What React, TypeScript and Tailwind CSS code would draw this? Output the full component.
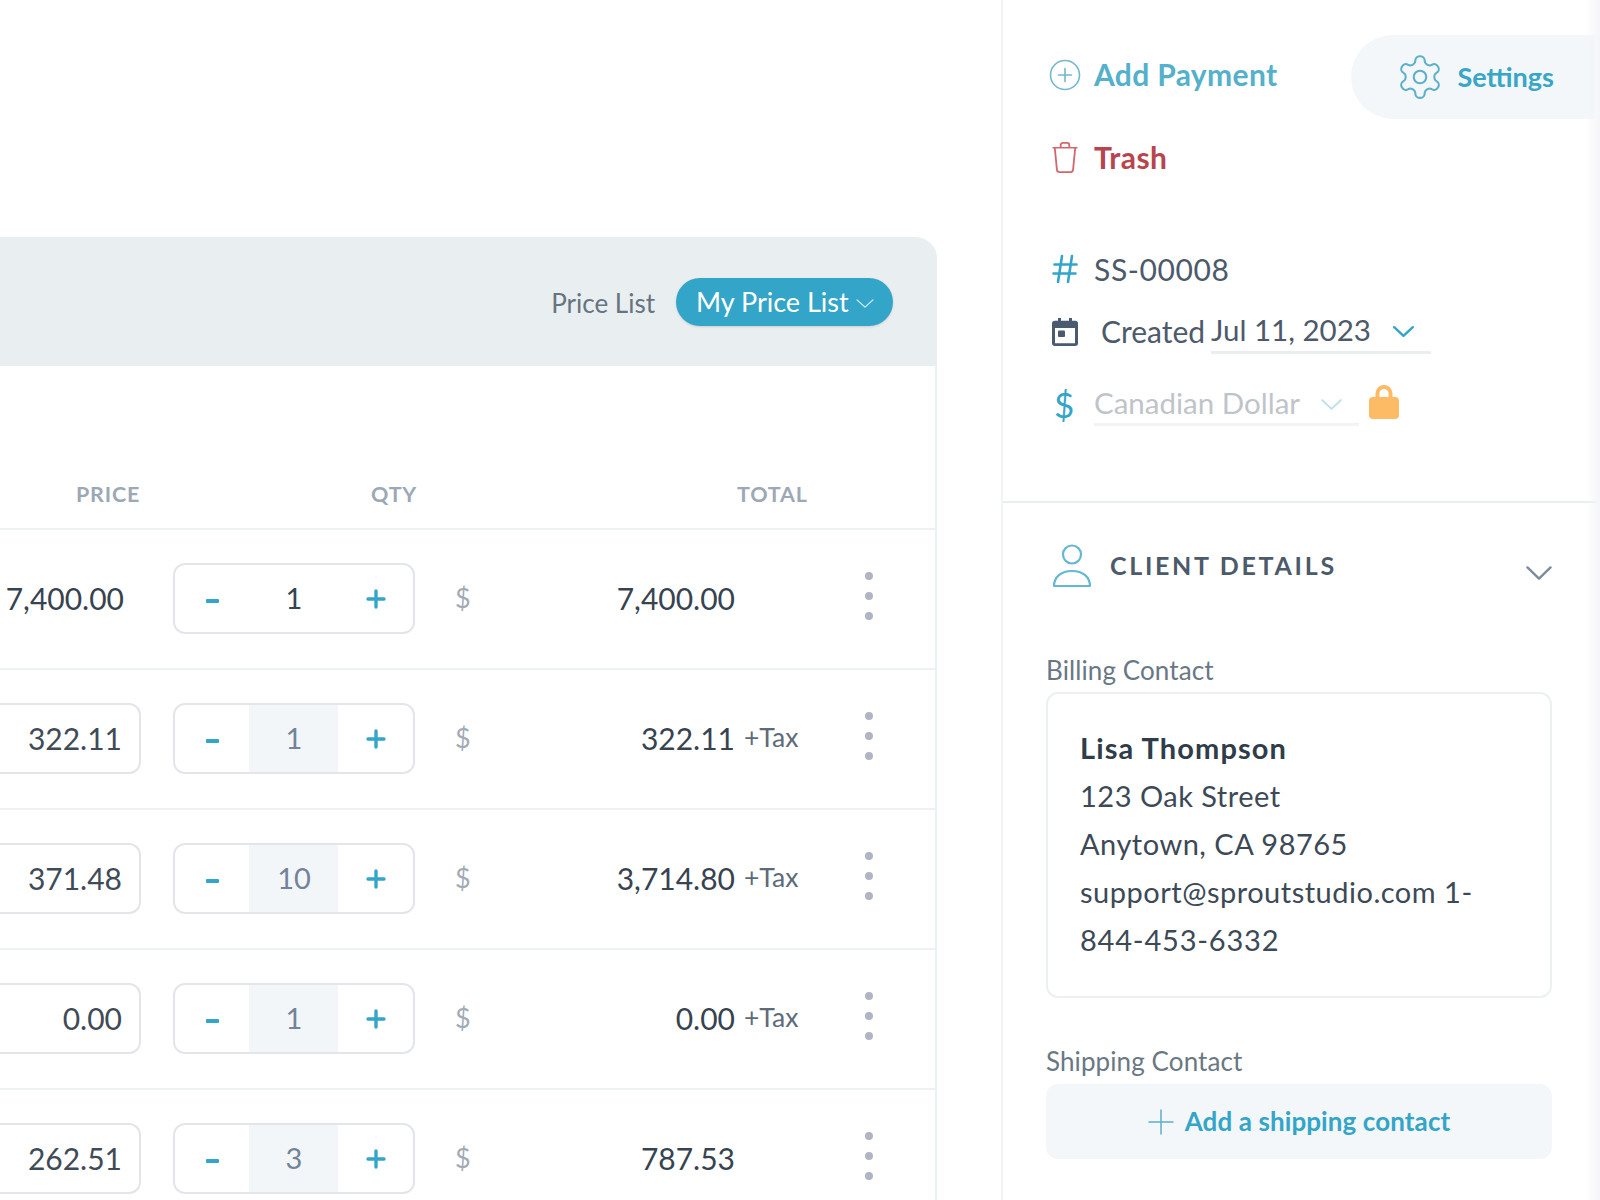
const font = "font-['Lato','Liberation_Sans',sans-serif]";

function Chevron({ className, w = 18, h = 10, sw = 1.6 }: { className?: string; w?: number; h?: number; sw?: number }) {
  return (
    <svg width={w} height={h} viewBox="0 0 18 10" fill="none" className={className} stroke="currentColor" strokeWidth={sw} strokeLinecap="round" strokeLinejoin="round" preserveAspectRatio="none">
      <path d="M1 1l8 8 8-8" />
    </svg>
  );
}

function Stepper({ qty, first }: { qty: string; first?: boolean }) {
  return (
    <div className="flex h-[71px] w-[242px] shrink-0 items-stretch overflow-hidden rounded-[12px] border-2 border-[#e3e5ea] bg-white">
      <div className="flex w-[74px] items-center justify-center pt-[5px]">
        <div className="h-[4px] w-[13px] rounded-[1px] bg-[#33a5c8]" />
      </div>
      <div className={`flex w-[89px] items-center justify-center pl-[1px] text-[29px] ${first ? "bg-white text-[#37434f]" : "bg-[#f3f6f8] text-[#73839a]"}`}>{qty}</div>
      <div className="flex flex-1 items-center justify-center pt-[2px]">
        <svg width="20" height="20" viewBox="0 0 20 20" stroke="#33a5c8" strokeWidth="3.4" strokeLinecap="round">
          <path d="M2 10h16M10 2v16" />
        </svg>
      </div>
    </div>
  );
}

const rows = [
  { price: "7,400.00", qty: "1", total: "7,400.00", tax: false, plain: true },
  { price: "322.11", qty: "1", total: "322.11", tax: true },
  { price: "371.48", qty: "10", total: "3,714.80", tax: true },
  { price: "0.00", qty: "1", total: "0.00", tax: true },
  { price: "262.51", qty: "3", total: "787.53", tax: false },
];

function Row({ r }: { r: (typeof rows)[number] }) {
  return (
    <div className="flex h-[140px] shrink-0 items-center border-b-2 border-[#eef1f3] pb-[2px]">
      {r.plain ? (
        <div className="w-[124px] shrink-0 text-right text-[30px] text-[#37434f]">{r.price}</div>
      ) : (
        <div className="flex h-[71px] w-[141px] shrink-0 items-center justify-end rounded-r-[12px] border-2 border-l-0 border-[#e3e5ea] pr-[17px] text-[30px] text-[#3f4b57]">{r.price}</div>
      )}
      <div className={r.plain ? "ml-[49px]" : "ml-[32px]"}>
        <Stepper qty={r.qty} first={r.plain} />
      </div>
      <div className="ml-[40px] w-[20px] shrink-0 text-[27px] text-[#a2abb5]">$</div>
      <div className="w-[260px] shrink-0 text-right text-[30px] text-[#37434f]">{r.total}</div>
      <div className="ml-[9px] w-[74px] shrink-0 text-[26.5px] text-[#5d6b78]">{r.tax ? "+Tax" : ""}</div>
      <div className="flex flex-col gap-[12px] pb-[4px] pl-[47px]">
        <span className="size-[8px] rounded-full bg-[#b1b5c3]" />
        <span className="size-[8px] rounded-full bg-[#b1b5c3]" />
        <span className="size-[8px] rounded-full bg-[#b1b5c3]" />
      </div>
    </div>
  );
}

function Main() {
  return (
    <main className="w-[1001px] shrink-0 overflow-hidden pt-[237px]">
      <section className="w-[937px] rounded-tr-[22px] border-r-2 border-[#eaf1f3]">
        <div className="mr-[-2px] flex h-[129px] items-center justify-end rounded-tr-[22px] bg-[#e9eef1] pr-[44px]">
          <span className="mt-[3px] text-[26px] text-[#66747f]">Price List</span>
          <div className="ml-[21px] flex h-[48px] w-[217px] items-center rounded-full bg-[#33a5c8] pl-[20px] pt-[1px] text-[27px] text-white shadow-sm">
            <span>My Price List</span>
            <Chevron className="ml-[7px] mt-[3px] text-[#cfe9f2]" w={18} h={9} sw={1.4} />
          </div>
        </div>
        <div className="flex h-[164px] items-end border-b-2 border-[#eef1f3] pb-[18px] text-[21.5px] font-bold tracking-[0.8px] text-[#9da8b6]">
          <span className="ml-[76px] w-[295px]">PRICE</span>
          <span className="w-[366px]">QTY</span>
          <span>TOTAL</span>
        </div>
        {rows.map((r) => (
          <Row key={r.price} r={r} />
        ))}
      </section>
    </main>
  );
}

function Sidebar() {
  return (
    <aside className="relative h-full flex-1 border-l-2 border-[#f0f3f5]">
      <div className="h-[503px] border-b-2 border-[#e9eef1] pl-[45px]">
        <div className="flex h-[119px] items-start pt-[35px]">
          <div className="flex h-[84px] items-center pb-[6px]">
            <svg width="32" height="32" viewBox="0 0 32 32" fill="none" stroke="#72b8cf" strokeWidth="1.6" strokeLinecap="round" className="ml-[1px] mt-[2px]">
              <circle cx="16" cy="16" r="14.5" />
              <path d="M16 9.5v13M9.5 16h13" />
            </svg>
            <span className="ml-[13px] text-[30px] font-bold tracking-[0.35px] text-[#55b0cc]">Add Payment</span>
          </div>
          <div className="ml-[74px] flex h-[84px] w-[244px] items-center rounded-l-[42px] bg-[#f3f7f9] pl-[44px]">
            <svg width="50" height="50" viewBox="0 0 24 24" fill="none" stroke="#5cb0ca" strokeWidth="1" strokeLinejoin="round">
              <path d="M12.22 2h-.44a2 2 0 0 0-2 2v.18a2 2 0 0 1-1 1.73l-.43.25a2 2 0 0 1-2 0l-.15-.08a2 2 0 0 0-2.73.73l-.22.38a2 2 0 0 0 .73 2.73l.15.1a2 2 0 0 1 1 1.72v.51a2 2 0 0 1-1 1.74l-.15.09a2 2 0 0 0-.73 2.73l.22.38a2 2 0 0 0 2.73.73l.15-.08a2 2 0 0 1 2 0l.43.25a2 2 0 0 1 1 1.73V20a2 2 0 0 0 2 2h.44a2 2 0 0 0 2-2v-.18a2 2 0 0 1 1-1.73l.43-.25a2 2 0 0 1 2 0l.15.08a2 2 0 0 0 2.73-.73l.22-.39a2 2 0 0 0-.73-2.73l-.15-.08a2 2 0 0 1-1-1.74v-.5a2 2 0 0 1 1-1.74l.15-.09a2 2 0 0 0 .73-2.73l-.22-.38a2 2 0 0 0-2.73-.73l-.15.08a2 2 0 0 1-2 0l-.43-.25a2 2 0 0 1-1-1.73V4a2 2 0 0 0-2-2z" />
              <circle cx="12" cy="12" r="3" />
            </svg>
            <span className="ml-[12px] text-[27px] font-bold text-[#37a6c7]">Settings</span>
          </div>
        </div>
        <div className="mt-[18px] flex h-[40px] items-center pl-[3px]">
          <svg width="28" height="33" viewBox="0 0 26 34" fill="none" stroke="#d2686e" strokeWidth="1.7" strokeLinejoin="round" strokeLinecap="round" preserveAspectRatio="none">
            <path d="M2 7h22M9 7V4.5c0-1.500.8-2.500 2-2.500h4c1.200 0 2 1 2 2.500V7M3.500 7l2 22.500c.1 1.500 1 2.500 2.500 2.500h10c1.500 0 2.400-1 2.500-2.500l2-22.500" />
          </svg>
          <span className="ml-[15px] text-[30px] font-bold tracking-[0.4px] text-[#b8454d]">Trash</span>
        </div>
        <div className="mt-[72px] flex h-[40px] items-center">
          <div className="w-[46px] pl-[4px]">
            <svg width="26" height="30" viewBox="0 0 26 30" fill="none" stroke="#33a5c8" strokeWidth="2.600" strokeLinecap="round">
              <path d="M10 2L6 28M20 2l-4 26M2.500 10.500h22M1.500 19.500h22" />
            </svg>
          </div>
          <span className="text-[30px] tracking-[0.6px] text-[#4c5a6a]">SS-00008</span>
        </div>
        <div className="mt-[22px] flex h-[40px] items-center pl-[4px]">
          <svg width="26" height="29" viewBox="0 0 26 32" fill="#4a5a70" preserveAspectRatio="none">
            <path d="M6 1h3v4H6zM17 1h3v4h-3zM3 4h20a3 3 0 0 1 3 3v22a3 3 0 0 1-3 3H3a3 3 0 0 1-3-3V7a3 3 0 0 1 3-3zm0 8v17h20V12z" />
            <rect x="6" y="15" width="7" height="7" rx="1" />
          </svg>
          <span className="ml-[23px] w-[110px] text-[30px] text-[#4c5a6a]">Created</span>
          <div className="flex h-[46px] w-[220px] items-center border-b-[3px] border-[#e9eef1] pt-[2px]">
            <span className="text-[29.5px] text-[#4c5a6a]">Jul 11, 2023</span>
            <Chevron className="ml-[22px] mt-[2px] text-[#33a5c8]" w={21} h={11} sw={2} />
          </div>
        </div>
        <div className="mt-[33px] flex h-[40px] items-center">
          <span className="w-[46px] pl-[6px] text-[35px] leading-none text-[#33a5c8]">$</span>
          <div className="flex h-[44px] w-[265px] items-center border-b-[3px] border-[#f1f3f5] pt-[2px]">
            <span className="text-[29.5px] text-[#bfc4ca]">Canadian Dollar</span>
            <Chevron className="ml-[21px] mt-[2px] text-[#bfdfe9]" w={21} h={11} sw={1.7} />
          </div>
          <svg width="30" height="35" viewBox="0 0 30 35" className="ml-[10px] mb-[6px]" fill="#fdbb66">
            <path d="M6.500 14V9.500a8.500 8.500 0 0 1 17 0V14h-4V9.500a4.500 4.500 0 0 0-9 0V14z" />
            <rect y="13" width="30" height="22" rx="4" />
          </svg>
        </div>
      </div>
      <div className="pl-[43px] pr-[48px]">
        <div className="flex h-[124px] items-center">
          <svg width="40" height="44" viewBox="0 0 40 44" fill="none" stroke="#66b7d1" strokeWidth="2.200" className="mt-[2px] ml-[6px]">
            <circle cx="20" cy="10.500" r="9" />
            <path d="M2 42c0-9 7-15 18-15s18 6 18 15z" strokeLinejoin="round" />
          </svg>
          <span className="ml-[18px] mt-[2px] text-[25px] font-bold tracking-[2.700px] text-[#4c5a6a]">CLIENT DETAILS</span>
          <Chevron className="ml-auto mt-[16px] text-[#7d8a99]" w={26} h={14} sw={1.6} />
        </div>
        <div className="mt-[28px] text-[26px] leading-[30px] tracking-[0.1px] text-[#6a7784]">Billing Contact</div>
        <div className="mt-[7px] h-[306px] rounded-[12px] border-2 border-[#ecf0f2] pl-[32px] pt-[30px] text-[29px] leading-[48px] tracking-[0.5px] text-[#3c4956]">
          <div className="font-bold tracking-[1.100px] text-[#2f3c49]">Lisa Thompson</div>
          <div>123 Oak Street</div>
          <div>Anytown, CA 98765</div>
          <div>support@sproutstudio.com 1-</div>
          <div className="tracking-[0.8px]">844-453-6332</div>
        </div>
        <div className="mt-[48px] text-[26px] leading-[30px] tracking-[0.1px] text-[#6a7784]">Shipping Contact</div>
        <div className="mt-[8px] flex h-[75px] items-center justify-center rounded-[12px] bg-[#f3f7f9]">
          <svg width="26" height="26" viewBox="0 0 26 26" stroke="#5cb0ca" strokeWidth="1.500" strokeLinecap="round">
            <path d="M1 13h24M13 1v24" />
          </svg>
          <span className="ml-[11px] text-[26px] font-bold tracking-[0.1px] text-[#33a5c8]">Add a shipping contact</span>
        </div>
      </div>
      <div className="absolute inset-y-0 right-0 w-[14px] bg-gradient-to-r from-transparent to-[#f4f5f8]" />
    </aside>
  );
}

export default function App() {
  return (
    <div className={`flex h-[1200px] w-[1600px] overflow-hidden bg-white ${font}`}>
      <Main />
      <Sidebar />
    </div>
  );
}
